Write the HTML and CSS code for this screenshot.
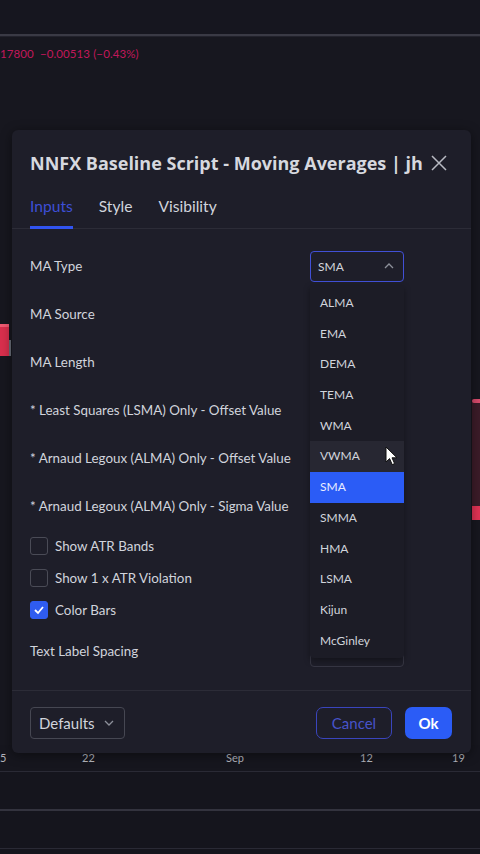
FILE: index.html
```html
<!DOCTYPE html>
<html>
<head>
<meta charset="utf-8">
<link rel="stylesheet" href="styles.css">
</head>
<body>
<div class="screen">
  <div class="top-strip"></div>
  <div class="sep-thick"></div>
  <div class="chart">
    <div class="legend">17800&nbsp; −0.00513 (−0.43%)</div>
    <div class="candle candle-left"></div>
    <div class="wick-left"></div>
    <div class="candle-right-body"></div>
    <div class="candle-right-cap"></div>
    <div class="candle-right-top"></div>
  </div>
  <div class="axis">
    <span class="tick" style="left:0px">5</span>
    <span class="tick" style="left:82px">22</span>
    <span class="tick" style="left:226px">Sep</span>
    <span class="tick" style="left:360px">12</span>
    <span class="tick" style="left:452px">19</span>
  </div>
  <div class="sep-thin"></div>
  <div class="pane pane-a"></div>
  <div class="sep-mid"></div>
  <div class="pane pane-b"></div>
  <div class="sep-thin"></div>
</div>

<div class="dialog">
  <div class="header">
    <div class="title">NNFX Baseline Script - Moving Averages | jh</div>
    <svg class="close" width="16" height="16" viewBox="0 0 16 16"><path d="M1 1L15 15M15 1L1 15" stroke="#b8bac2" stroke-width="1.5" fill="none"/></svg>
  </div>
  <div class="tabs">
    <div class="tab active">Inputs</div>
    <div class="tab">Style</div>
    <div class="tab">Visibility</div>
  </div>
  <div class="body">
    <div class="row">
      <div class="label">MA Type</div>
      <div class="select">
        <span>SMA</span>
        <svg width="12" height="8" viewBox="0 0 12 8"><path d="M2 6L6 2L10 6" stroke="#8d909a" stroke-width="1.3" fill="none"/></svg>
      </div>
    </div>
    <div class="row"><div class="label">MA Source</div></div>
    <div class="row"><div class="label">MA Length</div></div>
    <div class="row"><div class="label">* Least Squares (LSMA) Only - Offset Value</div></div>
    <div class="row"><div class="label">* Arnaud Legoux (ALMA) Only - Offset Value</div></div>
    <div class="row"><div class="label">* Arnaud Legoux (ALMA) Only - Sigma Value</div></div>
    <div class="row check"><span class="box"></span><span class="label">Show ATR Bands</span></div>
    <div class="row check"><span class="box"></span><span class="label">Show 1 x ATR Violation</span></div>
    <div class="row check"><span class="box checked"><svg width="12" height="10" viewBox="0 0 12 10"><path d="M2 5L5 8L10 2" stroke="#fff" stroke-width="1.8" fill="none"/></svg></span><span class="label">Color Bars</span></div>
    <div class="row last">
      <div class="label">Text Label Spacing</div>
      <div class="input"></div>
    </div>
  </div>
  <div class="footer">
    <div class="defaults">
      <span>Defaults</span>
      <svg width="12" height="8" viewBox="0 0 12 8"><path d="M2 2L6 6L10 2" stroke="#8d909a" stroke-width="1.3" fill="none"/></svg>
    </div>
    <div class="actions">
      <div class="btn cancel">Cancel</div>
      <div class="btn ok">Ok</div>
    </div>
  </div>

  <div class="menu">
    <div class="item">ALMA</div>
    <div class="item">EMA</div>
    <div class="item">DEMA</div>
    <div class="item">TEMA</div>
    <div class="item">WMA</div>
    <div class="item hover">VWMA</div>
    <div class="item selected">SMA</div>
    <div class="item">SMMA</div>
    <div class="item">HMA</div>
    <div class="item">LSMA</div>
    <div class="item">Kijun</div>
    <div class="item">McGinley</div>
  </div>
</div>

<svg class="cursor" width="14" height="20" viewBox="0 0 14 20"><path d="M1 1L1 16L4.6 12.6L7.2 18.6L9.6 17.6L7 11.8L12 11.8Z" fill="#fff" stroke="#111" stroke-width="1"/></svg>
</body>
</html>
```

FILE: styles.css
```css
* {
  box-sizing: border-box;
  margin: 0;
  padding: 0;
}

body {
  margin: 0;
  width: 480px;
  height: 854px;
  overflow: hidden;
  background: #15151d;
  font-family: Lato, "Open Sans", sans-serif;
  position: relative;
}

.screen {
  display: flex;
  flex-direction: column;
  height: 854px;
}

.top-strip {
  height: 34px;
  background: #16161f;
}

.sep-thick {
  height: 3px;
  background: #3a3a45;
  border-bottom: 1px solid #22222c;
}

.chart {
  position: relative;
  height: 708px;
  background: #17171f;
}

.legend {
  padding-top: 10px;
  font-size: 11.5px;
  line-height: 14px;
  color: #c2185b;
  letter-spacing: 0.1px;
}

.candle {
  position: absolute;
}

.candle-left {
  left: 0;
  top: 287px;
  width: 9px;
  height: 32px;
  background: #d92f4d;
  border-top: 3px solid #f05a72;
}

.wick-left {
  position: absolute;
  left: 9px;
  top: 303px;
  width: 2px;
  height: 16px;
  background: #6c6f7a;
}

.candle-right-body {
  position: absolute;
  left: 472px;
  top: 363px;
  width: 8px;
  height: 120px;
  background: #3c1c29;
}

.candle-right-top {
  position: absolute;
  left: 472px;
  top: 362px;
  width: 8px;
  height: 4px;
  border-radius: 2px 0 0 2px;
  background: #d94b6c;
}

.candle-right-cap {
  position: absolute;
  left: 472px;
  top: 469px;
  width: 8px;
  height: 14px;
  background: #e33355;
}

.axis {
  position: relative;
  height: 26px;
  background: #16161e;
}

.tick {
  position: absolute;
  top: 6px;
  font-size: 11px;
  line-height: 14px;
  color: #b3b5bd;
}

.sep-thin {
  height: 1px;
  background: #2a2a35;
}

.sep-mid {
  height: 2px;
  background: #33333e;
}

.pane-a {
  height: 37px;
  background: #15151d;
}

.pane-b {
  height: 37px;
  background: #15151d;
}

/* dialog */
.dialog {
  position: absolute;
  left: 12px;
  top: 130px;
  width: 459px;
  height: 623px;
  background: #1e1e29;
  border-radius: 6px;
  display: flex;
  flex-direction: column;
  box-shadow: 0 2px 12px rgba(0, 0, 0, 0.45);
}

.header {
  height: 46px;
  padding: 20px 24px 0 18px;
  display: flex;
  align-items: center;
  justify-content: space-between;
}

.title {
  font-family: "Open Sans", Lato, sans-serif;
  font-size: 18px;
  line-height: 26px;
  font-weight: 700;
  color: #d6d8df;
  white-space: nowrap;
}

.close {
  flex: none;
}

.tabs {
  height: 53px;
  padding-left: 18px;
  display: flex;
  align-items: flex-end;
  gap: 26px;
  border-bottom: 1px solid #2c2c37;
}

.tab {
  font-size: 15.6px;
  line-height: 20px;
  padding-bottom: 10px;
  border-bottom: 3px solid transparent;
  color: #d1d4dc;
  margin-bottom: -1px;
}

.tab.active {
  color: #3d4fd6;
  border-bottom-color: #3154f0;
}

.body {
  flex: 1;
  padding: 13px 0 0 18px;
}

.row {
  height: 48px;
  display: flex;
  align-items: center;
}

.row .label {
  font-size: 13.4px;
  color: #d1d4dc;
  width: 280px;
  white-space: nowrap;
}

.row.check {
  height: 32px;
}

.row.check .label {
  width: auto;
  margin-left: 7px;
}

.row.last {
  height: 50px;
}

.box {
  width: 18px;
  height: 18px;
  border: 1px solid #4a4b56;
  border-radius: 3px;
  display: flex;
  align-items: center;
  justify-content: center;
}

.box.checked {
  background: #2f5cf0;
  border-color: #2f5cf0;
}

.select {
  width: 94px;
  height: 31px;
  border: 1px solid #4150d6;
  border-radius: 4px;
  padding: 0 8px 0 7px;
  display: flex;
  align-items: center;
  justify-content: space-between;
  font-size: 12px;
  color: #d1d4dc;
}

.input {
  width: 94px;
  height: 31px;
  border: 1px solid #363643;
  border-radius: 4px;
}

.footer {
  height: 63px;
  border-top: 1px solid #2c2c37;
  padding: 16px 19px 0 18px;
  display: flex;
  justify-content: space-between;
  align-items: flex-start;
}

.defaults {
  width: 95px;
  height: 32px;
  border: 1px solid #464752;
  border-radius: 4px;
  padding: 0 9px 0 8px;
  display: flex;
  align-items: center;
  justify-content: space-between;
  font-size: 15px;
  color: #d1d4dc;
}

.actions {
  display: flex;
  gap: 13px;
}

.btn {
  height: 32px;
  border-radius: 7px;
  display: flex;
  align-items: center;
  justify-content: center;
  font-size: 15px;
}

.cancel {
  width: 76px;
  border: 1px solid #3a45bd;
  color: #4753c9;
}

.ok {
  width: 47px;
  background: #2b5cf6;
  color: #ffffff;
  font-weight: 700;
}

.menu {
  position: absolute;
  left: 298px;
  top: 155px;
  width: 94px;
  padding: 3px 0 2px;
  background: #1c1c26;
  border-radius: 0 0 4px 4px;
  box-shadow: 0 3px 6px rgba(0, 0, 0, 0.35);
}

.item {
  height: 30.7px;
  line-height: 30.7px;
  padding-left: 10px;
  font-size: 12px;
  color: #d1d4dc;
}

.item.hover {
  background: #272732;
}

.item.selected {
  background: #2b5cf6;
  color: #e8ecff;
}

.cursor {
  position: absolute;
  left: 385px;
  top: 446px;
}
```
